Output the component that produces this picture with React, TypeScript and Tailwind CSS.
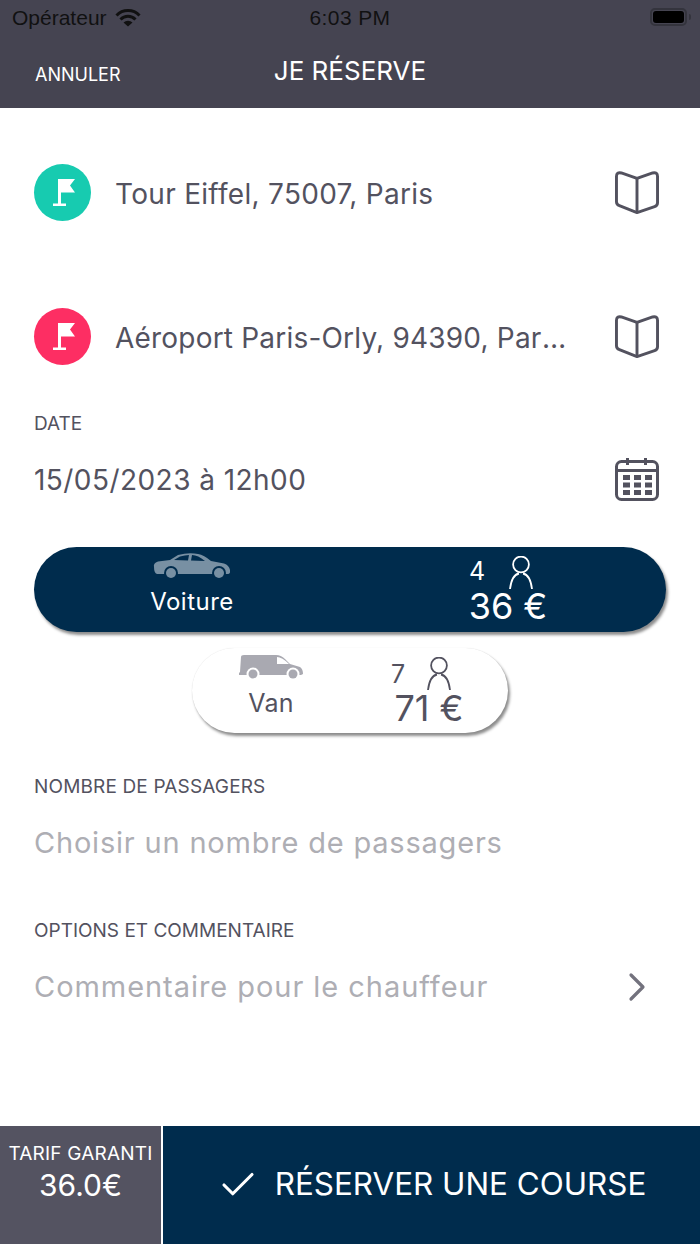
import React from 'react';
import { Check, ChevronRight } from 'lucide-react';

const sans = '"Inter", "Noto Sans", sans-serif';

const FlagIcon = () => (
  <svg width="22" height="27" viewBox="0 0 22 27" fill="white">
    <rect x="5" y="0" width="3" height="26" />
    <rect x="0" y="24.5" width="13" height="2.5" />
    <path d="M7 0 H22 L17 6.5 L22 13.5 H7 Z" />
  </svg>
);

const BookIcon = () => (
  <svg width="44" height="44" viewBox="0.5 0.5 45 45" fill="none" stroke="#53525f" strokeWidth="3" strokeLinejoin="round">
    <path d="M23 8 L7 2.5 Q2 1.5 2 6 V32 Q2 35 5 36 L23 43 L41 37 Q44 36 44 33 V6 Q44 1.5 39 2.5 Z" />
    <path d="M23 8 V42" />
  </svg>
);

const CalendarIcon = () => (
  <svg width="44" height="44" viewBox="0 0 44 44" fill="none">
    <rect x="1.5" y="4.5" width="41" height="38" rx="5" stroke="#53525f" strokeWidth="3" />
    <path d="M2 13.5 H42 M12.5 1 V8 M30.5 1 V8" stroke="#53525f" strokeWidth="3" />
    <g fill="#53525f">
      <rect x="8" y="18" width="7" height="5" /><rect x="19" y="18" width="7" height="5" /><rect x="30" y="18" width="7" height="5" />
      <rect x="8" y="25.5" width="7" height="5" /><rect x="19" y="25.5" width="7" height="5" /><rect x="30" y="25.5" width="7" height="5" />
      <rect x="8" y="33" width="7" height="5" /><rect x="19" y="33" width="7" height="5" /><rect x="30" y="33" width="7" height="5" />
    </g>
  </svg>
);

const WifiIcon = () => (
  <svg width="26" height="18" viewBox="0 0 26 18" fill="none" stroke="#111" strokeWidth="3">
    <path d="M1.5 6.5 A16 16 0 0 1 24.5 6.5" />
    <path d="M5.5 10.5 A10.5 10.5 0 0 1 20.5 10.5" />
    <path d="M13 17.5 L8.5 13.5 A6.5 6.5 0 0 1 17.5 13.5 Z" fill="#111" stroke="none" />
  </svg>
);

const PersonIcon = ({ color }: { color: string }) => (
  <svg width="26" height="33" viewBox="0 0 26 33" fill="none" stroke={color} strokeWidth="1.8">
    <circle cx="13" cy="8.5" r="7.9" />
    <path d="M2 33 C3 25 6 18.5 11 17.5 M24 33 C23 25 20 18.5 15 17.5" />
  </svg>
);

const CarIcon = () => (
  <svg width="78" height="26" viewBox="0 0 78 26">
    <path fill="#7890a3" d="M1 15 Q0 11 5 9.5 L17 8 L25 3 Q36 0 45 2 Q51 3 58 9 L71 11.5 Q76 13 77 18 V20 Q77 22 74 22 H4 Q1 21 1 15 Z" />
    <path fill="#002c4d" d="M21 8 L27 4.5 Q32 3 36 3 L35 8.5 Z M39 3 Q45 3 52 9 L38 8.5 Z" />
    <circle cx="18" cy="21" r="7" fill="#002c4d" /><circle cx="66" cy="21" r="7" fill="#002c4d" />
    <circle cx="18" cy="21" r="5" fill="#7890a3" /><circle cx="66" cy="21" r="5" fill="#7890a3" />
  </svg>
);

const VanIcon = () => (
  <svg width="66" height="26" viewBox="0 0 66 26">
    <path fill="#a9a9b1" d="M3 3 Q3 1 6 1 H38 Q43 1 47 5 L52 10 L62 13 Q65 15 65 20 L63 21 H1 L1 19 L2 18 Z" />
    <path fill="white" d="M39 3 Q44 3 51 10 H39 Z" />
    <circle cx="15" cy="20" r="6.5" fill="white" /><circle cx="55" cy="20" r="6.5" fill="white" />
    <circle cx="15" cy="20" r="4.5" fill="#a9a9b1" /><circle cx="55" cy="20" r="4.5" fill="#a9a9b1" />
  </svg>
);

const AddressRow = ({ color, text, tracking }: { color: string; text: string; tracking: string }) => (
  <div className="flex h-[57px] items-center">
    <div className={`flex h-[57px] w-[57px] shrink-0 items-center justify-center rounded-full pl-0.5 ${color}`}>
      <FlagIcon />
    </div>
    <div className={`ml-6 w-[455px] truncate pt-[2px] text-[28px] text-[#53525f] ${tracking}`}>{text}</div>
    <div className="ml-[45px]"><BookIcon /></div>
  </div>
);

export default function App() {
  return (
    <div className="flex h-[1244px] w-[700px] flex-col bg-white" style={{ fontFamily: sans }}>
      <header className="h-[108px] bg-[#454451]">
        <div className="flex h-[36px] items-center pl-3 text-[21px] text-[#111]" style={{ fontFamily: '"Liberation Sans", sans-serif' }}>
          <div className="flex w-[297px] items-center gap-2">
            <span>Opérateur</span>
            <WifiIcon />
          </div>
          <div className="w-[82px] whitespace-nowrap text-center font-medium tracking-[0.4px]">6:03 PM</div>
          <div className="ml-auto flex items-center gap-[2px] pr-[9px] pb-[2px]">
            <div className="h-[18px] w-[37px] rounded-[5px] border-2 border-[#34343d] p-[1px]"><div className="h-full rounded-[3px] bg-black" /></div>
            <div className="h-[6px] w-[2px] rounded-r-sm bg-[#34343d]" />
          </div>
        </div>
        <div className="relative flex h-[72px] items-center justify-center pb-[3px] text-white">
          <span className="text-[26px]">JE RÉSERVE</span>
          <span className="absolute left-[35px] top-[25px] text-[18px]">ANNULER</span>
        </div>
      </header>

      <main className="flex flex-1 flex-col px-[34px] pt-[56px]">
        <AddressRow color="bg-[#17cbb0]" text="Tour Eiffel, 75007, Paris" tracking="tracking-[0.3px]" />
        <div className="h-[87px]" />
        <AddressRow color="bg-[#fd2e63]" text="Aéroport Paris-Orly, 94390, Paris, France" tracking="tracking-[0.2px]" />

        <div className="mt-[47px] text-[19px] leading-6 text-[#53525f]">DATE</div>
        <div className="mt-[21px] flex h-[46px] items-center justify-between">
          <span className="text-[28px] tracking-[0.45px] text-[#53525f]">15/05/2023 à 12h00</span>
          <div className="mr-[7px] mb-[2px]"><CalendarIcon /></div>
        </div>

        <div className="mt-[44px] flex h-[85px] items-start rounded-full bg-[#002c4d] shadow-[2px_3px_3px_rgba(0,0,0,0.45)]">
          <div className="flex w-[316px] flex-col items-center pt-[5px]">
            <CarIcon />
            <span className="mt-[8px] text-[24px] leading-8 tracking-[0.5px] text-white">Voiture</span>
          </div>
          <div className="flex w-[316px] flex-col items-center pt-[9px] text-white">
            <div className="mr-[13px] flex items-end gap-[23px] leading-none">
              <span className="mb-[5px] text-[25px]">4</span>
              <PersonIcon color="white" />
            </div>
            <span className="mt-[1px] text-[36px] leading-8">36 €</span>
          </div>
        </div>

        <div className="mt-[16px] flex h-[85px] w-[316px] items-start self-center rounded-full bg-white shadow-[2px_3px_3px_rgba(0,0,0,0.45),0_0_1px_rgba(0,0,0,0.15)]">
          <div className="flex w-[158px] flex-col items-center pt-[6px]">
            <VanIcon />
            <span className="mt-[7px] text-[25px] leading-8 tracking-[0.3px] text-[#53525f]">Van</span>
          </div>
          <div className="flex w-[158px] flex-col items-center pt-[9px] text-[#53525f]">
            <div className="mr-[15px] flex items-end gap-[21px] leading-none">
              <span className="mb-[3px] text-[25px]">7</span>
              <PersonIcon color="#53525f" />
            </div>
            <span className="mt-[2px] text-[36px] leading-8">71 €</span>
          </div>
        </div>

        <div className="mt-[42px] text-[19px] leading-6 tracking-[0.15px] text-[#53525f]">NOMBRE DE PASSAGERS</div>
        <div className="mt-[21px] h-[46px] text-[29px] leading-[46px] tracking-[0.8px] text-[#aeaeb4]">Choisir un nombre de passagers</div>

        <div className="mt-[53px] text-[19px] leading-6 text-[#53525f]">OPTIONS ET COMMENTAIRE</div>
        <div className="mt-[21px] flex h-[46px] items-center justify-between text-[29px] tracking-[0.95px] text-[#aeaeb4]">
          <span>Commentaire pour le chauffeur</span>
          <ChevronRight size={48} strokeWidth={1.6} className="mr-[5px] text-[#73727d]" />
        </div>
      </main>

      <footer className="flex h-[118px] bg-white">
        <div className="flex w-[161px] flex-col items-center bg-[#545361] pt-[16px] text-white">
          <span className="text-[19px] leading-6 tracking-[0.2px]">TARIF GARANTI</span>
          <span className="mt-[1px] text-[30px] leading-9">36.0€</span>
        </div>
        <div className="ml-[2px] flex flex-1 items-center justify-center gap-[16px] bg-[#002c4d] text-white">
          <Check size={42} strokeWidth={1.8} />
          <span className="text-[31.4px]">RÉSERVER UNE COURSE</span>
        </div>
      </footer>
    </div>
  );
}
